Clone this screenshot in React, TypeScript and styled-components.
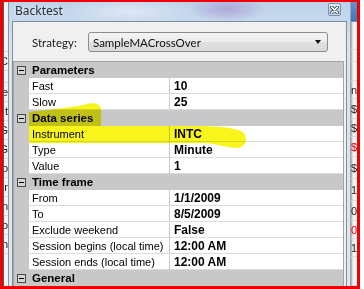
import React from "react";
import styled, { createGlobalStyle } from "styled-components";

const Global = createGlobalStyle`
  html, body { margin: 0; padding: 0; background: #ffffff; }
  body { width: 364px; height: 289px; overflow: hidden; }
  #root { width: 364px; height: 289px; }
`;

const Shot = styled.div`
  position: relative;
  box-sizing: border-box;
  width: 360px;
  height: 289px;
  border-style: solid;
  border-color: #f00000;
  border-width: 2px 3px 3px 3px;
  display: flex;
  overflow: hidden;
  background: #eceff2;
`;

const BackLeft = styled.div`
  flex: none;
  width: 5px;
  box-sizing: border-box;
  border-left: 1px solid #4d5d6d;
  background: #f3f3f3;
  display: flex;
  flex-direction: column;
  overflow: hidden;
`;

const BackCell = styled.div<{ $h: number; $top?: string; $red?: boolean; $align?: string }>`
  flex: none;
  height: ${(p) => p.$h}px;
  box-sizing: border-box;
  background: ${(p) => p.$top || "transparent"};
  border-bottom: 1px solid ${(p) => (p.$top ? "transparent" : "#dadada")};
  font-family: "Liberation Sans", Arial, sans-serif;
  font-size: 11px;
  color: ${(p) => (p.$red ? "#e00000" : "#222222")};
  line-height: ${(p) => p.$h}px;
  white-space: nowrap;
  overflow: hidden;
  display: flex;
  justify-content: ${(p) => p.$align || "flex-start"};
`;

const BackRight = styled.div`
  flex: 1;
  display: flex;
  flex-direction: column;
  background: #f5f5f5;
  box-shadow: inset 2px 0 2px rgba(0, 0, 0, 0.35);
  overflow: hidden;
  padding-left: 1px;
`;

const Window = styled.div`
  flex: none;
  width: 342px;
  box-sizing: border-box;
  display: flex;
  flex-direction: column;
  border-left: 1px solid #8797a9;
  padding: 0 3px 0 3px;
  background:
    radial-gradient(ellipse 38px 13px at 218px 7px, rgba(150, 112, 196, 0.45), rgba(150, 112, 196, 0)),
    radial-gradient(ellipse 70px 14px at 120px 9px, rgba(255, 255, 255, 0.45), rgba(255, 255, 255, 0)),
    linear-gradient(180deg, #bcd1e9 0px, #c6d8ec 19px, #d9e4ef 40px, #dfe7f0 100%);
`;

const TitleBar = styled.div`
  height: 19px;
  flex: none;
  display: flex;
  align-items: flex-start;
  justify-content: space-between;
  padding: 0 6px 0 3px;
`;

const Title = styled.span`
  font-family: "Noto Sans", "Open Sans", sans-serif;
  font-size: 12px;
  line-height: 16px;
  margin-top: 1px;
  color: #2b2f35;
  text-shadow: 0 0 6px rgba(255, 255, 255, 0.9);
`;

const CloseBtn = styled.div`
  width: 13px;
  height: 13px;
  margin-top: 1px;
  box-sizing: border-box;
  border: 1px solid #7790ad;
  border-radius: 2px;
  background: linear-gradient(180deg, #e3edf8 0%, #c2d5ea 50%, #aec6e2 51%, #c6d8ec 100%);
  display: flex;
  align-items: center;
  justify-content: center;
`;

const Client = styled.div`
  flex: 1;
  display: flex;
  flex-direction: column;
  background: #f0f0f0;
  border: 1px solid #7f8c99;
  border-bottom: none;
  min-height: 0;
`;

const StrategyRow = styled.div`
  display: flex;
  align-items: center;
  margin-top: 10px;
  padding-left: 19px;
  height: 20px;
`;

const Label = styled.span`
  width: 56px;
  font-family: Lato, "Noto Sans", sans-serif;
  font-size: 11.5px;
  color: #1a1a1a;
`;

const Combo = styled.div`
  width: 240px;
  height: 20px;
  box-sizing: border-box;
  border: 1px solid #8c8c8c;
  border-radius: 3px;
  background: linear-gradient(180deg, #f4f4f4 0%, #ececec 50%, #e0e0e0 51%, #d9d9d9 100%);
  display: flex;
  align-items: center;
  justify-content: space-between;
  padding: 0 6px 0 4px;
  font-family: Lato, "Noto Sans", sans-serif;
  font-size: 11.5px;
  color: #111;
`;

const Arrow = styled.span`
  width: 0;
  height: 0;
  border-left: 3.5px solid transparent;
  border-right: 3.5px solid transparent;
  border-top: 4px solid #111;
`;

const Grid = styled.div`
  margin: 9px 2px 0 0;
  border: 1px solid #a3a3a3;
  border-bottom: none;
  display: grid;
  grid-template-columns: 15px 141px 1fr;
  grid-auto-rows: 16px;
  background: #ffffff;
  font-family: "Liberation Sans", Arial, sans-serif;
  color: #000;
`;

const CatRow = styled.div`
  grid-column: 1 / -1;
  display: flex;
  align-items: flex-start;
  background: #c8c8c8;
`;

const Toggle = styled.span`
  flex: none;
  width: 9px;
  height: 9px;
  box-sizing: border-box;
  margin: 4px 3px 0 3px;
  border: 1px solid #4a4a4a;
  background: #d6d6d6;
  display: flex;
  align-items: center;
  justify-content: center;
  &::after {
    content: "";
    width: 5px;
    height: 1px;
    background: #000;
  }
`;

const CatTitle = styled.span`
  padding-left: 3px;
  padding-top: 2px;
  font-size: 11.5px;
  font-weight: bold;
  line-height: 13px;
`;

const Gutter = styled.div`
  background: #c8c8c8;
`;

const NameCell = styled.div`
  box-sizing: border-box;
  border-bottom: 1px solid #dcdcdc;
  border-right: 1px solid #cdcdcd;
  padding: 2px 0 0 3px;
  font-size: 11px;
  line-height: 13px;
  white-space: nowrap;
  overflow: hidden;
`;

const ValueCell = styled.div`
  box-sizing: border-box;
  border-bottom: 1px solid #dcdcdc;
  padding: 2px 0 0 4px;
  font-size: 12px;
  font-weight: bold;
  line-height: 13px;
  white-space: nowrap;
`;

const Highlight = styled.svg`
  position: absolute;
  left: -3px;
  top: -2px;
  width: 364px;
  height: 289px;
  pointer-events: none;
  mix-blend-mode: multiply;
`;

type Prop = { name: string; value: string };
type Cat = { title: string; props: Prop[] };

const cats: Cat[] = [
  { title: "Parameters", props: [{ name: "Fast", value: "10" }, { name: "Slow", value: "25" }] },
  {
    title: "Data series",
    props: [
      { name: "Instrument", value: "INTC" },
      { name: "Type", value: "Minute" },
      { name: "Value", value: "1" },
    ],
  },
  {
    title: "Time frame",
    props: [
      { name: "From", value: "1/1/2009" },
      { name: "To", value: "8/5/2009" },
      { name: "Exclude weekend", value: "False" },
      { name: "Session begins (local time)", value: "12:00 AM" },
      { name: "Session ends (local time)", value: "12:00 AM" },
    ],
  },
  { title: "General", props: [] },
];

const leftCells: { h: number; t: string }[] = [
  { h: 50, t: "" },
  { h: 19, t: "C" },
  { h: 12, t: "" },
  { h: 19, t: "le" },
  { h: 19, t: "t" },
  { h: 19, t: "G" },
  { h: 19, t: "G" },
  { h: 19, t: "o" },
  { h: 19, t: "r" },
  { h: 19, t: "n" },
  { h: 19, t: "o" },
  { h: 19, t: "h" },
  { h: 40, t: "" },
];

const rightCells: { h: number; t: string; red?: boolean; top?: string; right?: boolean }[] = [
  { h: 20, t: "", top: "linear-gradient(180deg,#5d97d2,#3b77b6)" },
  { h: 28, t: "" },
  { h: 12, t: "" },
  { h: 19, t: "" },
  { h: 18, t: "ng" },
  { h: 20, t: "$0" },
  { h: 18, t: "$0" },
  { h: 20, t: "$0", red: true },
  { h: 22, t: "$0" },
  { h: 22, t: "1", right: true },
  { h: 20, t: "0.0" },
  { h: 18, t: "0.0", red: true },
  { h: 18, t: "1", right: true },
  { h: 40, t: "" },
];

export default function App() {
  return (
    <>
      <Global />
      <Shot>
        <BackLeft>
          {leftCells.map((c, i) => (
            <BackCell key={i} $h={c.h} $align="flex-end">
              {c.t}
            </BackCell>
          ))}
        </BackLeft>
        <Window>
          <TitleBar>
            <Title>Backtest</Title>
            <CloseBtn>
              <svg width="9" height="8" viewBox="0 0 9 8">
                <path d="M1.5 1 L7.5 7 M7.5 1 L1.5 7" stroke="#3c4a5c" strokeWidth="3.2" strokeLinecap="round" />
                <path d="M1.5 1 L7.5 7 M7.5 1 L1.5 7" stroke="#ffffff" strokeWidth="1.6" strokeLinecap="round" />
              </svg>
            </CloseBtn>
          </TitleBar>
          <Client>
            <StrategyRow>
              <Label>Strategy:</Label>
              <Combo>
                <span>SampleMACrossOver</span>
                <Arrow />
              </Combo>
            </StrategyRow>
            <Grid>
              {cats.map((c) => (
                <React.Fragment key={c.title}>
                  <CatRow>
                    <Toggle />
                    <CatTitle>{c.title}</CatTitle>
                  </CatRow>
                  {c.props.map((p) => (
                    <React.Fragment key={p.name}>
                      <Gutter />
                      <NameCell>{p.name}</NameCell>
                      <ValueCell>{p.value}</ValueCell>
                    </React.Fragment>
                  ))}
                </React.Fragment>
              ))}
            </Grid>
          </Client>
        </Window>
        <BackRight>
          {rightCells.map((c, i) => (
            <BackCell key={i} $h={c.h} $top={c.top} $red={c.red} $align={c.right ? "flex-end" : "flex-start"}>
              {c.t}
            </BackCell>
          ))}
        </BackRight>
        <Highlight viewBox="0 0 364 289">
          <path
            d="M29,112 C45,110 70,108 87,104 C95,102 101,104 101,110 L101,126 L29,126 Z"
            fill="#f7f51c"
          />
          <path
            d="M29,126 L205,126 C222,127 238,128 244,133 C248,139 246,147 238,148 C228,148 218,144 205,143 L29,143 Z"
            fill="#f7f51c"
          />
        </Highlight>
      </Shot>
    </>
  );
}
